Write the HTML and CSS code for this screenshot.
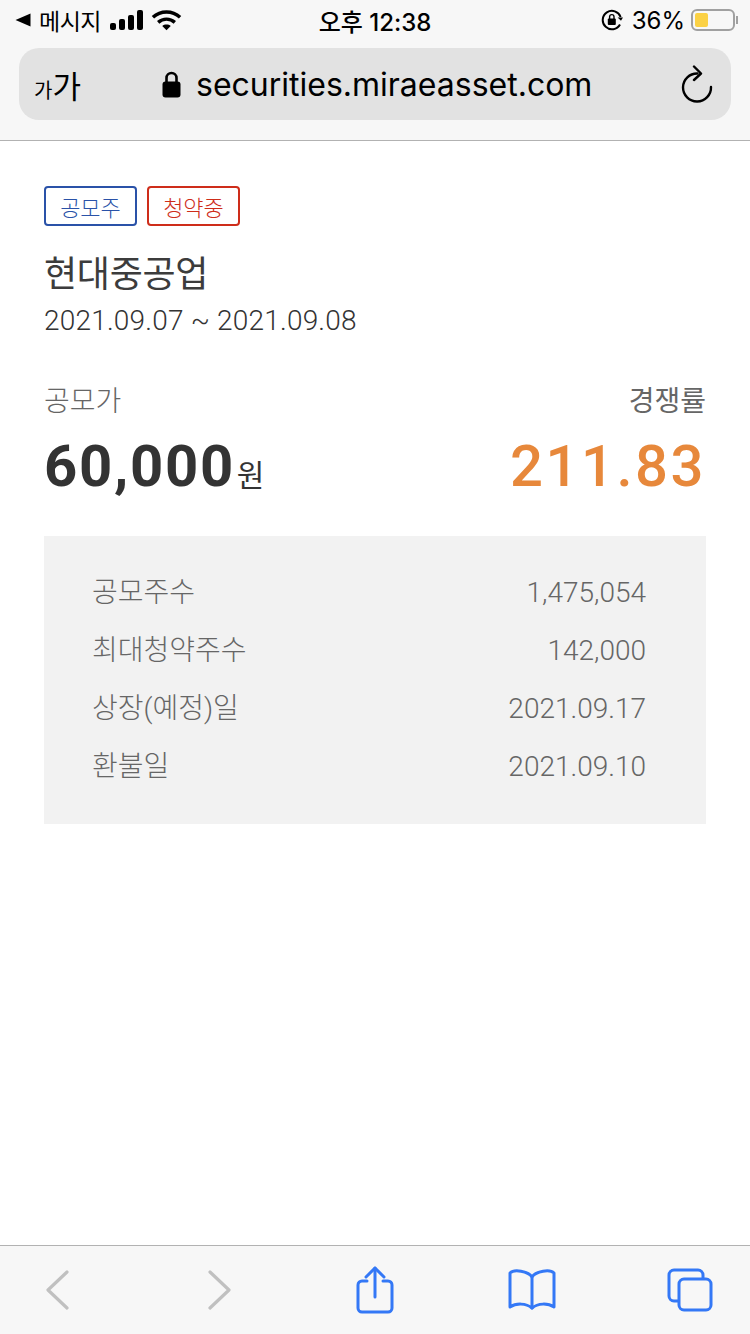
FILE: index.html
```html
<!DOCTYPE html>
<html lang="ko">
<head>
    <meta charset="UTF-8">
    <meta name="viewport" content="width=device-width, initial-scale=1.0">
    <title>현대중공업 공모주</title>
    <link rel="stylesheet" href="styles.css">
</head>
<body>
    <header class="browser-top">
        <div class="status-bar">
            <div class="status-left">
                <svg class="back-arrow" width="16" height="14" viewBox="0 0 16 14"><path d="M15.5 0.5V13.5L0.5 7Z" fill="#000"/></svg>
                <span class="status-app">메시지</span>
                <svg class="signal" width="33" height="20" viewBox="0 0 33 20"><rect x="0" y="13" width="6" height="7" rx="2"/><rect x="9" y="9" width="6" height="11" rx="2"/><rect x="18" y="5" width="6" height="15" rx="2"/><rect x="27" y="0" width="6" height="20" rx="2"/></svg>
                <svg class="wifi" width="31" height="22" viewBox="0 0 32 22" fill="none" stroke="#000" stroke-width="3.6"><path d="M2 8.2C10 0.8 22 0.8 30 8.2"/><path d="M7.4 13.4C12.4 9 19.6 9 24.6 13.4"/><path d="M16 21.5L11.6 17.2C14 15.2 18 15.2 20.4 17.2Z" fill="#000" stroke="none"/></svg>
            </div>
            <div class="status-time">오후 12:38</div>
            <div class="status-right">
                <svg class="rotate-lock" width="22" height="22" viewBox="0 0 22 22" fill="none" stroke="#000" stroke-width="2"><path d="M19 15.5A9.2 9.2 0 1 1 19.6 8"/><path d="M16.6 8.4L20 11.8L22 8.4" fill="#000" stroke="none"/><rect x="6.8" y="9.6" width="8" height="6.4" rx="1" fill="#000" stroke="none"/><path d="M8.6 10V7.8A2.2 2.2 0 0 1 13 7.8V10" stroke-width="1.4"/></svg>
                <span class="status-battery-text">36%</span>
                <div class="battery">
                    <div class="battery-fill"></div>
                </div>
                <div class="battery-cap"></div>
            </div>
        </div>
        <div class="url-bar">
            <div class="font-size-btn"><span class="small-ga">가</span><span class="big-ga">가</span></div>
            <div class="url-text">
                <svg class="lock" width="19" height="27" viewBox="0 0 19 27"><path d="M4.5 11V7a5 5 0 0 1 10 0v4" fill="none" stroke="#000" stroke-width="2.6"/><rect x="0.5" y="10.5" width="18" height="16" rx="3" fill="#000"/></svg>
                <span>securities.miraeasset.com</span>
            </div>
            <svg class="reload" width="32" height="38" viewBox="0 0 32 38" fill="none" stroke="#000" stroke-width="2.4" stroke-linecap="round" stroke-linejoin="round"><path d="M16.5 8.5A14 14 0 1 0 30 22"/><path d="M13 1.5L20 8.5L13 15"/></svg>
        </div>
    </header>

    <main class="content">
        <div class="tags">
            <span class="tag tag-blue">공모주</span>
            <span class="tag tag-red">청약중</span>
        </div>
        <h1 class="title">현대중공업</h1>
        <div class="period">2021.09.07 ~ 2021.09.08</div>

        <div class="price-row">
            <div>
                <div class="price-label">공모가</div>
                <div class="price-value">60,000<span class="won">원</span></div>
            </div>
            <div class="price-right">
                <div class="price-label rate-label">경쟁률</div>
                <div class="rate-value">211.83</div>
            </div>
        </div>

        <dl class="detail">
            <div class="detail-row"><dt>공모주수</dt><dd>1,475,054</dd></div>
            <div class="detail-row"><dt>최대청약주수</dt><dd>142,000</dd></div>
            <div class="detail-row"><dt>상장(예정)일</dt><dd>2021.09.17</dd></div>
            <div class="detail-row"><dt>환불일</dt><dd>2021.09.10</dd></div>
        </dl>
    </main>

    <footer class="toolbar">
        <svg width="24" height="40" viewBox="0 0 24 40" fill="none" stroke="#c0c0c0" stroke-width="3.2" stroke-linecap="round" stroke-linejoin="round"><path d="M21 2L2 20L21 38"/></svg>
        <svg width="24" height="40" viewBox="0 0 24 40" fill="none" stroke="#c0c0c0" stroke-width="3.2" stroke-linecap="round" stroke-linejoin="round"><path d="M3 2L22 20L3 38"/></svg>
        <svg width="38" height="48" viewBox="0 0 38 48" fill="none" stroke="#3478f6" stroke-width="3" stroke-linecap="round" stroke-linejoin="round"><path d="M11 15H6a4 4 0 0 0-4 4v23a4 4 0 0 0 4 4h26a4 4 0 0 0 4-4V19a4 4 0 0 0-4-4h-5"/><path d="M19 31V2"/><path d="M10 11L19 2L28 11"/></svg>
        <svg width="48" height="42" viewBox="0 0 48 42" fill="none" stroke="#3478f6" stroke-width="3" stroke-linecap="round" stroke-linejoin="round"><path d="M24 8C20 2 6 0 2 4V38C8 34 18 34 24 39C30 34 40 34 46 38V4C42 0 28 2 24 8Z"/><path d="M24 8V39"/></svg>
        <svg width="46" height="44" viewBox="0 0 46 44" fill="none" stroke="#3478f6" stroke-width="3" stroke-linejoin="round"><path d="M11 33H7a5 5 0 0 1-5-5V7a5 5 0 0 1 5-5h24a5 5 0 0 1 5 5v4"/><rect x="12" y="11" width="32" height="31" rx="5"/></svg>
    </footer>
</body>
</html>
```

FILE: styles.css
```css
* {
    box-sizing: border-box;
}
html, body {
    height: 100%;
}
body {
    margin: 0;
    width: 750px;
    height: 1334px;
    display: flex;
    flex-direction: column;
    background-color: #fff;
    font-family: Roboto, "Noto Sans CJK KR", sans-serif;
    color: #333;
    overflow: hidden;
}

/* browser chrome */
.browser-top {
    height: 141px;
    background-color: #f7f7f7;
    border-bottom: 1px solid #b2b2b2;
}
.status-bar {
    height: 48px;
    padding: 0 15px 8px;
    display: grid;
    grid-template-columns: 1fr auto 1fr;
    align-items: center;
    color: #000;
    font-family: Inter, "Noto Sans CJK KR", sans-serif;
    font-size: 24px;
}
.status-left {
    display: flex;
    align-items: center;
}
.status-app {
    font-size: 23px;
    margin-left: 8px;
    letter-spacing: -0.5px;
}
.signal {
    margin-left: 9px;
}
.wifi {
    margin-left: 8px;
}
.status-time {
    font-weight: 500;
    font-size: 24px;
}
.status-right {
    display: flex;
    align-items: center;
    justify-content: flex-end;
    margin-right: -3px;
}
.rotate-lock {
    margin-right: 9px;
}
.status-battery-text {
    font-size: 24px;
    margin-right: 6px;
}
.battery {
    width: 44px;
    height: 22px;
    border: 2px solid #a0a0a0;
    border-radius: 6px;
    padding: 2px;
}
.battery-fill {
    width: 13px;
    height: 14px;
    background-color: #fbd144;
    border-radius: 2px;
}
.battery-cap {
    width: 2px;
    height: 8px;
    margin-left: 1px;
    background-color: #a0a0a0;
}
.url-bar {
    height: 72px;
    margin: 0 19px;
    background-color: #e2e2e2;
    border-radius: 20px;
    display: flex;
    align-items: center;
    color: #000;
    padding: 0 18px 0 15px;
}
.font-size-btn {
    display: flex;
    align-items: baseline;
    width: 128px;
    font-family: "Noto Sans CJK KR", sans-serif;
}
.small-ga {
    font-size: 20px;
}
.big-ga {
    font-size: 31px;
}
.url-text {
    flex: 1;
    display: flex;
    align-items: center;
    font-family: Inter, sans-serif;
    font-size: 32px;
}
.lock {
    margin-right: 15px;
}

/* main */
.content {
    flex: 1;
    padding: 45px 44px 0;
}
.tags {
    display: flex;
    gap: 10px;
}
.tag {
    width: 93px;
    height: 40px;
    border: 2px solid;
    border-radius: 4px;
    display: flex;
    align-items: center;
    justify-content: center;
    font-size: 22px;
    font-weight: 300;
}
.tag-blue {
    border-color: #2a52a8;
    color: #2a52a8;
}
.tag-red {
    border-color: #ce2d1a;
    color: #ce2d1a;
}
.title {
    margin: 26px 0 0;
    font-size: 36px;
    line-height: 46px;
    font-weight: 400;
    color: #3c3c3c;
    letter-spacing: -0.3px;
}
.period {
    margin-top: 4px;
    font-size: 28px;
    line-height: 38px;
    font-weight: 300;
    letter-spacing: 0.2px;
}
.price-row {
    margin-top: 44px;
    display: flex;
    justify-content: space-between;
}
.price-right {
    text-align: right;
}
.price-label {
    font-size: 28px;
    line-height: 36px;
    font-weight: 300;
    color: #666;
}
.rate-label {
    font-weight: 400;
}
.price-value {
    margin-top: 11px;
    font-size: 58px;
    line-height: 70px;
    font-weight: 700;
    letter-spacing: 1.7px;
}
.won {
    font-size: 30px;
    font-weight: 400;
    margin-left: 2px;
    letter-spacing: 0;
}
.rate-value {
    margin-top: 11px;
    font-size: 58px;
    line-height: 70px;
    font-weight: 500;
    letter-spacing: 2.5px;
    color: #e7883b;
}
.detail {
    margin: 25px 0 0;
    background-color: #f2f2f2;
    height: 288px;
    padding: 27px 60px 0 48px;
}
.detail-row {
    height: 58px;
    display: flex;
    justify-content: space-between;
    align-items: center;
    font-size: 28px;
    font-weight: 300;
    color: #666;
}
.detail-row dt {
    margin-bottom: 4px;
}
.detail-row dd {
    margin: 0;
}

/* bottom toolbar */
.toolbar {
    height: 89px;
    background-color: #f7f7f7;
    border-top: 1px solid #b2b2b2;
    display: grid;
    grid-template-columns: 116px 206px 106px 208px 1fr;
    justify-items: center;
    align-items: center;
    padding-right: 6px;
}
```
